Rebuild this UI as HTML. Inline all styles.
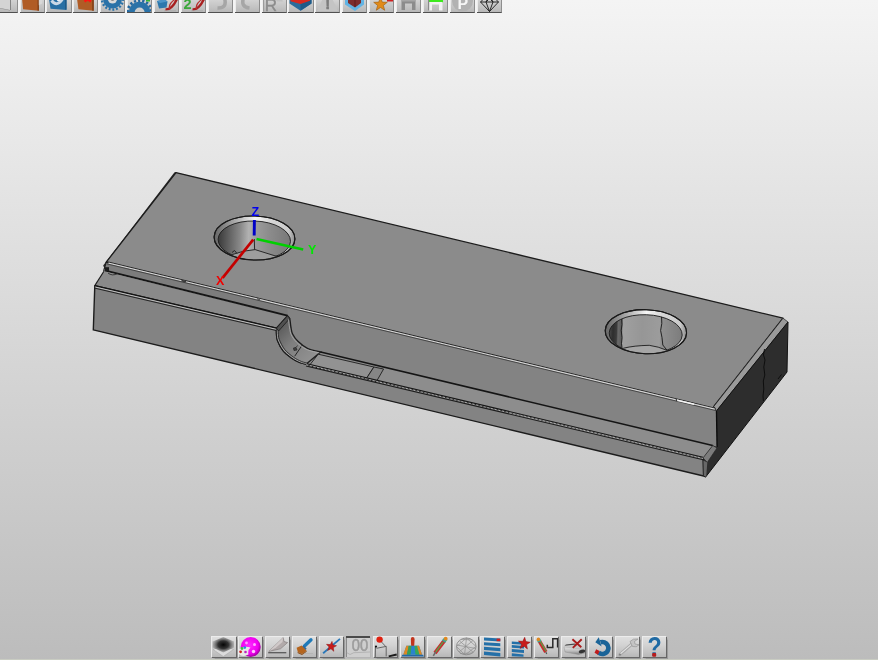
<!DOCTYPE html>
<html lang="en">
<head>
<meta charset="utf-8">
<title>CAD viewport</title>
<style>
html,body{margin:0;padding:0;}
body{width:878px;height:660px;overflow:hidden;position:relative;
  font-family:"Liberation Sans",sans-serif;
  background:linear-gradient(to bottom,#f4f4f4 0px,#bcbcbc 660px);}
#scene{position:absolute;left:0;top:0;width:878px;height:660px;filter:blur(0.45px);}
.tb{position:absolute;height:24px;filter:blur(0.4px);}
.btn{position:absolute;top:0;width:24.200px;height:21px;
  background:linear-gradient(to bottom,#e0e0e0 0%,#d4d4d4 40%,#c4c4c4 75%,#b8b8b8 100%);
  box-shadow:inset 1px 1px 0 #ececec, 1px 1px 0 #666, 1.500px 1.500px 1px #9a9a9a;
  overflow:hidden;}
.btn svg{position:absolute;left:0;top:0px;width:25px;height:23px;}
.btn.flat{background:#cecece;box-shadow:inset 0 2px 0 #4a4a4a, inset 1px 0 0 #8a8a8a, 1px 1px 0 #b4b4b4;}
#top{left:0;top:-8.700px;}
#top .btn svg{top:-1px;}
#top .btn{box-shadow:inset 1px 1px 0 #ececec, 0 1px 0 #505050, 1px 0 0 #8e8e8e, 1px 1px 0 #707070;}
#bot{left:211px;top:636.400px;}
#strip{position:absolute;left:0;top:659px;width:878px;height:1px;background:#c9ccc2;}
</style>
</head>
<body>
<svg id="scene" viewBox="0 0 878 660" width="878" height="660">
<defs>
<linearGradient id="gTop" x1="0" y1="0" x2="1" y2="0"><stop offset="0" stop-color="#8b8b8b"/><stop offset="1" stop-color="#8a8a8a"/></linearGradient>
<linearGradient id="gWallL" x1="0" y1="0" x2="1" y2="0">
 <stop offset="0" stop-color="#3a3a3a"/><stop offset="0.1" stop-color="#545454"/><stop offset="0.3" stop-color="#888888"/><stop offset="0.42" stop-color="#b2b2b2"/><stop offset="0.52" stop-color="#9c9c9c"/><stop offset="0.7" stop-color="#8c8c8c"/><stop offset="1" stop-color="#787878"/></linearGradient>
<linearGradient id="gWallR" x1="0" y1="0" x2="1" y2="0">
 <stop offset="0" stop-color="#4a4a4a"/><stop offset="0.05" stop-color="#2e2e2e"/><stop offset="0.1" stop-color="#3c3c3c"/><stop offset="0.12" stop-color="#6a6a6a"/><stop offset="0.17" stop-color="#5c5c5c"/><stop offset="0.185" stop-color="#a0a0a0"/><stop offset="0.45" stop-color="#969696"/><stop offset="0.69" stop-color="#9c9c9c"/><stop offset="0.71" stop-color="#909090"/><stop offset="1" stop-color="#7c7c7c"/></linearGradient>
<linearGradient id="gRing" x1="0" y1="0" x2="1" y2="0">
 <stop offset="0" stop-color="#666"/><stop offset="0.15" stop-color="#8e8e8e"/><stop offset="0.33" stop-color="#c0c0c0"/><stop offset="0.5" stop-color="#f6f6f6"/><stop offset="0.68" stop-color="#d8d8d8"/><stop offset="0.92" stop-color="#cacaca"/><stop offset="1" stop-color="#8a8a8a"/></linearGradient>
<linearGradient id="gFillet" x1="0" y1="0" x2="1" y2="1">
 <stop offset="0" stop-color="#4a4a4a"/><stop offset="0.45" stop-color="#7e7e7e"/><stop offset="1" stop-color="#999"/></linearGradient>
</defs>
<line x1="175.4" y1="173.4" x2="104.6" y2="265.8" stroke="#2c2c2c" stroke-width="2.7" stroke-linecap="round"/>
<polygon points="176.0,172.6 783.0,318.2 713.8,406.4 715.5,409.3 106.0,262.4" fill="#8b8b8b" stroke="#1c1c1c" stroke-width="1.3" stroke-linejoin="round"/>
<polygon points="783.0,318.2 788.0,322.0 716.6,410.8 713.8,406.4" fill="#9a9a9a" stroke="#1c1c1c" stroke-width="0.7"/>
<polygon points="716.6,410.8 788.0,322.0 787.0,372.0 705.5,477.2 703.6,476.0 703.0,457.9 712.7,445.5 717.0,446.9" fill="#2d2d2d" stroke="#111" stroke-width="1" stroke-linejoin="round"/>
<path d="M764.500,349 l-1,6 l1.500,5 l-1.200,7 l1,8 l-1.500,6 l0.500,8 l-0.800,7 l0.400,5 M781.500,374.500 l-3.500,4.500" fill="none" stroke="#0a0a0a" stroke-width="0.9"/>
<path d="M106,262.9 L716.2,410.0 L717,446.9 L712.7,445.5 L320.6,352.0  C318.4,351.4 311.2,350.1 307.4,348.3 C303.6,346.5 300.4,343.7 297.9,341.3 C295.4,338.9 293.8,336.4 292.6,334.0 C291.4,331.6 291.4,329.5 290.9,327.0 C290.4,324.5 290.4,320.9 289.8,319.0 C289.2,317.1 287.9,316.3 287.5,315.8 L107.7,271.5 L104.5,268.500 Z" fill="#838383"/>
<polygon points="106.0,262.9 287.5,306.7 287.5,315.8 107.7,271.5 104.5,268.5" fill="#7c7c7c"/>
<polygon points="103.9,271.2 287.5,315.8 276.5,328.1 94.8,285.6" fill="#8a8a8a"/>
<path d="M94.8,285.6 L276.500,328.100  C276.5,329.1 276.3,331.9 276.5,334.0 C276.7,336.1 276.4,337.7 277.5,340.5 C278.6,343.3 280.7,347.7 283.0,350.6 C285.3,353.5 288.8,356.0 291.5,358.0 C294.2,360.0 297.1,361.4 299.5,362.4 C301.9,363.4 304.9,363.9 306.0,364.2 L703,457.9 L703.6,476.0 L93.3,329.9 Z" fill="#838383" stroke="#1c1c1c" stroke-width="1.4" stroke-linejoin="round"/>
<polygon points="320.6,352.0 712.7,445.5 703.0,457.9 306.0,364.2" fill="#8d8d8d"/>
<path d="M287.500,315.800  C287.9,316.3 289.2,317.1 289.8,319.0 C290.4,320.9 290.4,324.5 290.9,327.0 C291.4,329.5 291.4,331.6 292.6,334.0 C293.8,336.4 295.4,338.9 297.9,341.3 C300.4,343.7 303.6,346.5 307.4,348.3 C311.2,350.1 318.4,351.4 320.6,352.0 L306,364.2  C304.9,363.9 301.9,363.4 299.5,362.4 C297.1,361.4 294.2,360.0 291.5,358.0 C288.8,356.0 285.3,353.5 283.0,350.6 C280.7,347.7 278.6,343.3 277.5,340.5 C276.4,337.7 276.7,336.1 276.5,334.0 C276.3,331.9 276.5,329.1 276.5,328.1 Z" fill="url(#gFillet)" stroke="#1c1c1c" stroke-width="1.3"/>
<polygon points="712.7,445.5 717.0,447.9 707.3,462.4 703.0,457.9" fill="#7c7c7c" stroke="#1c1c1c" stroke-width="0.6"/>
<polygon points="703.4,460.5 707.3,462.4 706.2,476.8 703.8,475.8" fill="#686868"/>
<line x1="107.0" y1="261.7" x2="715.5" y2="408.3" stroke="#222" stroke-width="1.00" />
<line x1="108.5" y1="263.1" x2="714.8" y2="409.3" stroke="#d4d4d4" stroke-width="1.40" />
<line x1="107.0" y1="263.9" x2="716.0" y2="410.6" stroke="#3c3c3c" stroke-width="0.90" />
<line x1="104.5" y1="270.4" x2="287.5" y2="315.6" stroke="#151515" stroke-width="1.90" />
<line x1="103.9" y1="271.2" x2="94.8" y2="285.6" stroke="#1c1c1c" stroke-width="1.10" />
<line x1="106.0" y1="263.0" x2="103.6" y2="271.0" stroke="#1c1c1c" stroke-width="1.10" />
<line x1="94.8" y1="285.6" x2="276.5" y2="328.1" stroke="#151515" stroke-width="1.20" />
<line x1="95.2" y1="287.0" x2="276.2" y2="329.3" stroke="#c4c4c4" stroke-width="0.90" />
<line x1="94.6" y1="288.1" x2="276.6" y2="330.6" stroke="#222" stroke-width="1.00" />
<line x1="320.6" y1="352.0" x2="712.7" y2="445.5" stroke="#141414" stroke-width="1.50" />
<polygon points="318.2,354.2 373.9,367.0 366.0,379.1 309.1,365.8" fill="#929292" stroke="#1c1c1c" stroke-width="0.9"/>
<polygon points="373.9,367.0 383.6,369.0 376.4,381.6 366.0,379.1" fill="#868686" stroke="#1c1c1c" stroke-width="0.9"/>
<line x1="306.0" y1="363.5" x2="703.0" y2="457.2" stroke="#151515" stroke-width="1.10" />
<line x1="306.0" y1="364.8" x2="703.0" y2="458.5" stroke="#b8b8b8" stroke-width="0.90" stroke-dasharray="2.2 1.6"/>
<line x1="306.0" y1="366.0" x2="703.2" y2="459.8" stroke="#1c1c1c" stroke-width="1.10" />
<line x1="716.4" y1="410.8" x2="717.0" y2="446.9" stroke="#0c0c0c" stroke-width="1.20" />
<path d="M276.500,328.100  C276.5,329.1 276.3,331.9 276.5,334.0 C276.7,336.1 276.4,337.7 277.5,340.5 C278.6,343.3 280.7,347.7 283.0,350.6 C285.3,353.5 288.8,356.0 291.5,358.0 C294.2,360.0 297.1,361.4 299.5,362.4 C301.9,363.4 304.9,363.9 306.0,364.2" fill="none" stroke="#b4b4b4" stroke-width="0.8" transform="translate(0.900,-0.500)"/>
<path d="M276.500,328.100  C276.5,329.1 276.3,331.9 276.5,334.0 C276.7,336.1 276.4,337.7 277.5,340.5 C278.6,343.3 280.7,347.7 283.0,350.6 C285.3,353.5 288.8,356.0 291.5,358.0 C294.2,360.0 297.1,361.4 299.5,362.4 C301.9,363.4 304.9,363.9 306.0,364.2" fill="none" stroke="#222" stroke-width="0.8" transform="translate(1.800,-1.000)"/>
<path d="M302.300,345 L294.700,356.200" fill="none" stroke="#1a1a1a" stroke-width="0.9"/>
<path d="M293.500,348 l2.500,-0.500 l1,2.500 l-3,0.500 z M296,347.500 l1.500,-2" fill="#444" stroke="#222" stroke-width="0.7"/>
<polygon points="276.5,328.1 287.5,315.8 289.8,318.4 278.6,331" fill="#505050" stroke="#1a1a1a" stroke-width="0.8"/>
<path d="M289.8,318.4  C290.0,320.3 290.4,324.5 290.9,327.0 C291.4,329.5 291.4,331.6 292.6,334.0 C293.8,336.4 295.4,338.9 297.9,341.3 C300.4,343.7 303.6,346.5 307.4,348.3 C311.2,350.1 318.4,351.4 320.6,352.0" fill="none" stroke="#b0b0b0" stroke-width="0.8" transform="translate(-1.300,0.900)"/>
<line x1="677.0" y1="400.2" x2="694.0" y2="404.3" stroke="#f4f4f4" stroke-width="1.60" />
<line x1="676.2" y1="399.0" x2="676.8" y2="401.2" stroke="#222" stroke-width="0.90" />
<line x1="181.5" y1="280.6" x2="186.0" y2="281.7" stroke="#3a3a3a" stroke-width="1.80" />
<line x1="257.0" y1="298.8" x2="260.0" y2="299.5" stroke="#5a5a5a" stroke-width="1.60" />
<path d="M108,273 q4,3.500 10,0.500" fill="none" stroke="#222" stroke-width="0.8"/>
<rect x="105" y="267.2" width="4" height="4" fill="#1c1c1c"/>
<clipPath id="c254"><ellipse cx="254.3" cy="240.3" rx="36.2" ry="19.3" transform="rotate(1.8 254.5 240.3)"/></clipPath>
<ellipse cx="254.5" cy="238.0" rx="40.4" ry="22.0" transform="rotate(1.8 254.5 238.0)" fill="url(#gRing)" stroke="#1a1a1a" stroke-width="1.1"/>
<ellipse cx="254.3" cy="240.3" rx="36.2" ry="19.3" transform="rotate(1.8 254.5 240.3)" fill="url(#gWallL)" stroke="#1c1c1c" stroke-width="0.9"/>
<g clip-path="url(#c254)">
<path d="M226,262 L232.500,254.500 Q243,250.400 255.100,249.600 L276.500,256.300 L290,262 L260,270 Z" fill="#9e9e9e" stroke="#1c1c1c" stroke-width="0.9"/>
<path d="M254.300,239 L254.600,249.500 M232,252.500 l2.500,-2 l2.500,3" fill="none" stroke="#1c1c1c" stroke-width="0.9"/>
</g>
<ellipse cx="254.5" cy="238.0" rx="40.4" ry="22.0" transform="rotate(1.8 254.5 238.0)" fill="none" stroke="#1a1a1a" stroke-width="1.1"/>
<clipPath id="c645"><ellipse cx="645.7" cy="334.0" rx="36.5" ry="19.3" transform="rotate(1.8 645.9 334.0)"/></clipPath>
<ellipse cx="645.9" cy="331.7" rx="40.7" ry="22.0" transform="rotate(1.8 645.9 331.7)" fill="url(#gRing)" stroke="#1a1a1a" stroke-width="1.1"/>
<ellipse cx="645.7" cy="334.0" rx="36.5" ry="19.3" transform="rotate(1.8 645.9 334.0)" fill="url(#gWallR)" stroke="#1c1c1c" stroke-width="0.9"/>
<g clip-path="url(#c645)">
<path d="M615,356 L623.600,348.200 Q634,345.600 649.200,345.300 Q658,346.400 667.500,350.500 L680,356 L650,362 Z" fill="#a6a6a6" stroke="#1c1c1c" stroke-width="0.9"/>
<path d="M621.500,316.500 l0.500,8 l-0.800,6 l0.900,7 l-0.600,6 l0.500,4 M661.500,315.500 l0.300,8 l-1.200,7 l1.400,7 l0.800,7.500 l4,5" fill="none" stroke="#161616" stroke-width="0.9"/>
</g>
<ellipse cx="645.9" cy="331.7" rx="40.7" ry="22.0" transform="rotate(1.8 645.9 331.7)" fill="none" stroke="#1a1a1a" stroke-width="1.1"/>
<line x1="253.2" y1="239.6" x2="222.6" y2="277.8" stroke="#c40000" stroke-width="2.7"/>
<line x1="256.5" y1="239" x2="303.2" y2="249.4" stroke="#00d000" stroke-width="2.6"/>
<line x1="254.4" y1="220" x2="254.2" y2="235.5" stroke="#0000c8" stroke-width="2.9"/>
<g font-family="Liberation Sans, sans-serif" font-weight="bold" font-size="12.5px" text-anchor="middle"><text x="255.3" y="215.6" fill="#0000ee">Z</text><text x="312.1" y="254.3" fill="#00e800">Y</text><text x="220.2" y="285.1" fill="#f00000">X</text></g>
</svg>
<div class="tb" id="top">
<div class="btn " style="left:-7.4px"><svg viewBox="0 0 25 23"><polygon points="0,0 17,0 17,19.900 7,17.900 0,17" fill="#d4d4d4"/><polygon points="17,0 18,0 18,20.100 17,19.900" fill="#858585"/><polygon points="7,17.900 17,19.900 17,20.500 7,18.500" fill="#909090"/></svg></div>
<div class="btn " style="left:19.5px"><svg viewBox="0 0 25 23"><polygon points="1.700,6 18.800,6 18.800,20.800 3.100,19.300" fill="#b05c26"/><polygon points="17.600,6 18.800,6 18.800,20.800 17.600,20.700" fill="#7c3c14"/><polygon points="18.800,6 22.200,6 22.200,13.500 18.800,15.200" fill="#d8d8d8"/></svg></div>
<div class="btn " style="left:46.4px"><svg viewBox="0 0 25 23"><polygon points="2.500,6 20.500,6 20.500,19.900 4.500,18.800" fill="#276fa4"/><polygon points="19,6 20.500,6 20.500,19.600 19,19.400" fill="#1d5a88"/><path d="M5.500,10.500 q5.500,7 11,-1.500" fill="none" stroke="#c9d8e6" stroke-width="3"/><circle cx="12.500" cy="9.300" r="1.900" fill="#eef2f6"/></svg></div>
<div class="btn " style="left:73.3px"><svg viewBox="0 0 25 23"><polygon points="3.700,6 20.700,6 20.700,20.800 5.400,19.300" fill="#b05c26"/><polygon points="19.300,6 20.700,6 20.700,20.800 19.300,20.700" fill="#7c3c14"/><path d="M10,6 l8,5.500 M18.500,6.500 l-7,5" stroke="#ff1414" stroke-width="2.400"/></svg></div>
<div class="btn " style="left:100.2px"><svg viewBox="0 0 25 23"><circle cx="12.500" cy="9" r="9.500" fill="#2a72a8"/><circle cx="12.500" cy="9" r="10.600" fill="none" stroke="#2a72a8" stroke-width="2.400" stroke-dasharray="1.900 1.800"/><circle cx="12.500" cy="9" r="4.600" fill="#dadada"/><circle cx="12.500" cy="9" r="2" fill="#8a8a8a"/></svg></div>
<div class="btn " style="left:127.0px"><svg viewBox="0 0 25 23"><circle cx="12.600" cy="22.500" r="10.800" fill="#2a72a8"/><circle cx="12.600" cy="22.500" r="12" fill="none" stroke="#2468a0" stroke-width="2.800" stroke-dasharray="2.200 2"/><circle cx="12.600" cy="22.500" r="5" fill="#cfcfcf"/><rect x="19" y="8" width="4" height="3.500" fill="#35b335"/></svg></div>
<div class="btn " style="left:153.9px"><svg viewBox="0 0 25 23"><polygon points="3,11 10.500,9.500 13.500,11.500 12.500,17.500 5,18.500" fill="#2d78ad"/><polygon points="3,11 10.500,9.500 13.500,11.500 6,13" fill="#4c95c8"/><path d="M11.500,19.500 q6.500,0.500 12,-11.500" fill="none" stroke="#a82020" stroke-width="2.400"/><path d="M15.800,19.800 q-2.500,-6 7.500,-12" fill="none" stroke="#b83030" stroke-width="1.300"/><path d="M10,20.800 h12" stroke="#a8a8a8" stroke-width="0.800"/></svg></div>
<div class="btn " style="left:180.8px"><svg viewBox="0 0 25 23"><text x="2.500" y="19" font-family="Liberation Sans, sans-serif" font-weight="bold" font-size="14.500" fill="#3ba83b">2</text><path d="M11.500,19.500 q6.500,0.500 12,-11.500" fill="none" stroke="#a82020" stroke-width="2.400"/><path d="M15.800,19.800 q-2.500,-6 7.500,-12" fill="none" stroke="#b83030" stroke-width="1.300"/><path d="M10,20.800 h12" stroke="#a8a8a8" stroke-width="0.800"/></svg></div>
<div class="btn " style="left:207.7px"><svg viewBox="0 0 25 23"><path d="M9.500,18 q10,0.500 7,-10" fill="none" stroke="#a6a6a6" stroke-width="3.600"/></svg></div>
<div class="btn " style="left:234.6px"><svg viewBox="0 0 25 23"><path d="M14.500,18 q-9,-1 -6,-10" fill="none" stroke="#a6a6a6" stroke-width="3.600"/></svg></div>
<div class="btn " style="left:261.5px"><svg viewBox="0 0 25 23"><text x="2.800" y="21.300" font-family="Liberation Sans, sans-serif" font-size="17" fill="#8c8c8c" stroke="#8c8c8c" stroke-width="0.400">R</text><polygon points="13,9 19,9 21.500,11.500 15,11.500" fill="#c2c2c2"/><rect x="1" y="9" width="1.200" height="12.500" fill="#9a9a9a"/></svg></div>
<div class="btn " style="left:288.4px"><svg viewBox="0 0 25 23"><polygon points="1.500,9 23.500,9 23.500,13.500 12.500,20.800 1.500,13.500" fill="#2a6c9c"/><polygon points="12.500,20.800 23.500,13.500 23.500,9 12.500,14" fill="#1f5a88"/><polygon points="2.500,9 22,9 22,10.800 12.500,14 2.500,11.300" fill="#d62a20"/></svg></div>
<div class="btn " style="left:315.3px"><svg viewBox="0 0 25 23"><polygon points="2,21 12.500,-1 23,21" fill="#c4c4c4"/><text x="10.200" y="18.800" font-family="Liberation Sans, sans-serif" font-weight="bold" font-size="15" fill="#7c7c7c" stroke="#7c7c7c" stroke-width="0.500">!</text></svg></div>
<div class="btn " style="left:342.2px"><svg viewBox="0 0 25 23"><polygon points="3,9 22,9 22,14.500 13,21 3,14.500" fill="#62b4e4"/><polygon points="6,9 19,9 19,13 13,17.500 6,13" fill="#7c2c2c"/><polygon points="12.500,9 13.500,9 13.500,17 12.500,17" fill="#5a1c1c"/></svg></div>
<div class="btn " style="left:369.1px"><svg viewBox="0 0 25 23"><polygon points="11.5,7.3 13.3,12.1 18.3,12.3 14.4,15.4 15.7,20.3 11.5,17.5 7.3,20.3 8.6,15.4 4.7,12.3 9.7,12.1" fill="#e08a1a" stroke="#9a5a10" stroke-width="0.600"/><rect x="18" y="8" width="6.500" height="3.500" fill="#d02020"/><rect x="18" y="8" width="6.500" height="1.400" fill="#3a6ac8"/></svg></div>
<div class="btn " style="left:396.0px"><svg viewBox="0 0 25 23"><path d="M5.500,9 h14 v11 h-3.500 v-6.500 h-7 v6.500 h-3.500 z" fill="#8c8c8c"/><rect x="5.500" y="9" width="14" height="2.500" fill="#a6a6a6"/></svg></div>
<div class="btn " style="left:422.8px"><svg viewBox="0 0 25 23"><rect x="5" y="8" width="15" height="4.500" fill="#3eea1e"/><path d="M5.500,12 h14 v8.500 h-3.500 v-6 h-7 v6 h-3.500 z" fill="#f2f2f2"/><rect x="5" y="8" width="1.200" height="12.500" fill="#8a8a8a"/></svg></div>
<div class="btn " style="left:449.7px"><svg viewBox="0 0 25 23"><circle cx="12.500" cy="11" r="10.500" fill="#b2b2b2"/><text x="7.500" y="18.500" font-family="Liberation Sans, sans-serif" font-weight="bold" font-size="16" fill="#f6f6f6">P</text></svg></div>
<div class="btn " style="left:476.6px"><svg viewBox="0 0 25 23"><path d="M3.500,12 h18 l-9,9.500 z M3.500,12 l3.500,-3.500 h11 l3.500,3.500 M9,12 l3.500,9.500 l3.500,-9.500 M9,12 l1.800,-3.500 M16,12 l-1.800,-3.500 M9,12 l3.500,-3.500 l3.500,3.500" fill="none" stroke="#1a1a1a" stroke-width="0.9"/></svg></div>

</div>
<div class="tb" id="bot">
<div class="btn " style="left:0.4px"><svg viewBox="0 0 25 23"><defs><radialGradient id="ly" cx="0.5" cy="0.5" r="0.5"><stop offset="0" stop-color="#050505"/><stop offset="0.5" stop-color="#2a2a2a" stop-opacity="0.95"/><stop offset="1" stop-color="#666" stop-opacity="0.35"/></radialGradient></defs><polygon points="12.300,20.500 22.500,13.500 12.300,9 2,13.500" fill="#dcdcdc" stroke="#aaa" stroke-width="0.600"/><polygon points="12.300,1 23,5.500 23,11.500 12.300,16.500 1.600,11.500 1.600,5.500" fill="url(#ly)"/></svg></div>
<div class="btn " style="left:27.3px"><svg viewBox="0 0 25 23"><defs><radialGradient id="mg" cx="0.45" cy="0.42" r="0.56"><stop offset="0" stop-color="#ff28ff"/><stop offset="0.75" stop-color="#f000f0"/><stop offset="1" stop-color="#a800a8"/></radialGradient></defs><circle cx="12.700" cy="11" r="10" fill="url(#mg)"/><circle cx="8.500" cy="7" r="1.400" fill="#ff9cff"/><circle cx="16.500" cy="8.500" r="1.500" fill="#ffa8ff"/><circle cx="15.500" cy="15.500" r="1.700" fill="#ffc4ff"/><path d="M1,13 q5.500,-3.500 11.500,-1.500 q-3,2.500 -2,7 q-6,3 -9.500,-0.500 z" fill="#e8e8e8"/><circle cx="4" cy="12.500" r="1.400" fill="#40c040"/><circle cx="6.800" cy="11.600" r="1.300" fill="#2090e0"/><circle cx="2.600" cy="15.800" r="1.400" fill="#d02020"/><circle cx="7.500" cy="16" r="1.300" fill="#c020c0"/></svg></div>
<div class="btn " style="left:54.2px"><svg viewBox="0 0 25 23"><polygon points="3.800,15.400 18.200,1.600 19,5.500 22.600,6.600 15.500,12.800" fill="#b2aaaa" stroke="#7c7676" stroke-width="0.600"/><polygon points="3.800,15.400 18.200,1.600 17.500,6 11,11.500" fill="#d0c9c9"/><line x1="3.200" y1="16.700" x2="21.300" y2="16.700" stroke="#5a5a5a" stroke-width="1.300"/></svg></div>
<div class="btn " style="left:81.1px"><svg viewBox="0 0 25 23"><path d="M19,3.800 L12.500,10" stroke="#1f7ab8" stroke-width="3.400" stroke-linecap="round"/><path d="M11.500,9.300 l3.200,3.400 l-2,2 l-3.200,-3.400 z" fill="#2a68a0"/><polygon points="4.600,11.700 9.600,9.500 14.600,14.800 10.200,17.900 5.800,16" fill="#b5651d"/><polygon points="5.800,16 10.200,17.900 14.600,14.800 14.600,15.800 10,19 5.500,17" fill="#8a4a12"/><line x1="13" y1="17.500" x2="21" y2="17.500" stroke="#b0b0b0" stroke-width="0.7"/></svg></div>
<div class="btn " style="left:108.0px"><svg viewBox="0 0 25 23"><line x1="4.100" y1="17.300" x2="21" y2="2.900" stroke="#2a78b8" stroke-width="1.800"/><polygon points="13.0,5.4 13.8,9.0 17.5,9.7 14.3,11.6 14.8,15.3 12.0,12.8 8.6,14.4 10.1,11.0 7.5,8.3 11.3,8.6" fill="#c81c1c" stroke="#8a1010" stroke-width="0.500"/></svg></div>
<div class="btn flat" style="left:134.8px"><svg viewBox="0 0 25 23"><text x="5.800" y="14.800" font-family="Liberation Sans, sans-serif" font-size="16.600" fill="#9c9c9c" stroke="#9c9c9c" stroke-width="0.550" textLength="16.400" lengthAdjust="spacingAndGlyphs">00</text><path d="M0.900,16.700 l3.100,1.800 l3.800,-1.800 l16.200,-0.700" fill="none" stroke="#b0b0b0" stroke-width="0.9"/></svg></div>
<div class="btn " style="left:161.7px"><svg viewBox="0 0 25 23"><circle cx="6.600" cy="3.600" r="3.200" fill="#e02010"/><path d="M8.500,6 L12.800,10.600 M3.500,12.300 L13.200,10.400 L13.200,20.400 M2.500,10.400 L2.300,21.700" fill="none" stroke="#5a5a5a" stroke-width="0.9"/><circle cx="3" cy="10.600" r="1.100" fill="#111"/><path d="M15.700,20.400 l8,-1.900" stroke="#1a1a1a" stroke-width="1.800"/></svg></div>
<div class="btn " style="left:188.6px"><svg viewBox="0 0 25 23"><path d="M10.800,3 q0,-2 1.900,-2 q1.900,0 1.900,2 l-0.400,7 h-3 z" fill="#c2341c"/><path d="M6.400,9.800 h12.600 l3.100,9 h-18.800 z" fill="#2a84cc"/><path d="M6.400,9.800 h2.400 l-2,9 h-3.500 z" fill="#e08820"/><path d="M8.800,9.800 h2.700 l-1,9 h-3.700 z" fill="#3aa050"/><path d="M14.500,9.800 h2.500 l2.500,9 h-4 z" fill="#38a858"/><path d="M17,9.800 h2 l3.100,9 h-2.600 z" fill="#e08820"/><path d="M2.300,18.800 h20.700 l1,1.700 h-22.500 z" fill="#2268a8"/></svg></div>
<div class="btn " style="left:215.5px"><svg viewBox="0 0 25 23"><path d="M17.500,4.500 L8,17" stroke="#c43030" stroke-width="3.800"/><path d="M16,6 L8.800,15.800" stroke="#48b048" stroke-width="1.200"/><path d="M18.800,2.600 L16.600,5.600" stroke="#38a898" stroke-width="4"/><circle cx="18.700" cy="2.700" r="1.900" fill="#e08820"/><path d="M8.600,16 L6.300,19.800" stroke="#6a6a6a" stroke-width="1.600"/></svg></div>
<div class="btn " style="left:242.4px"><svg viewBox="0 0 25 23"><ellipse cx="13.300" cy="10.400" rx="9.800" ry="8.400" fill="none" stroke="#8a8a8a" stroke-width="0.9"/><path d="M3.800,9 L23,12.500 M13.500,2 L11.500,19 M6,16 L20,4.500 M6.500,5 L20.500,16.500 M3.500,10.500 L13.500,2 L23,10.400 L12,19 Z M8,3.500 L19,3.800 M7,17.500 L19.500,17" fill="none" stroke="#8e8e8e" stroke-width="0.7"/></svg></div>
<div class="btn " style="left:269.3px"><svg viewBox="0 0 25 23"><g fill="#2470a8"><polygon points="4,1.600 20.300,2.600 20.300,5.600 4,4.600"/><polygon points="4,6.200 20.300,7.300 20.300,10.300 4,9.200"/><polygon points="4,10.800 20.300,12 20.300,15.200 4,14"/><polygon points="4,15.600 20.300,17 20.300,20.400 4,19"/></g><rect x="16.600" y="2.600" width="3.700" height="2.600" fill="#cc2020"/></svg></div>
<div class="btn " style="left:296.2px"><svg viewBox="0 0 25 23"><g fill="#2470a8"><polygon points="4.800,5.400 16,6.200 16,8.700 4.800,7.900"/><polygon points="4.800,9.100 17,10 17,12.600 4.800,11.700"/><polygon points="4.800,12.900 17,13.900 17,16.900 4.800,15.900"/><polygon points="4.800,17.300 16.500,18.400 16.500,20.800 4.800,20.200"/></g><polygon points="17.7,1.3 18.9,5.6 23.3,6.2 19.6,8.6 20.4,13.0 17.0,10.2 13.1,12.4 14.6,8.2 11.4,5.1 15.8,5.3" fill="#c81c1c" stroke="#8a1010" stroke-width="0.500"/></svg></div>
<div class="btn " style="left:323.1px"><svg viewBox="0 0 25 23"><path d="M5.300,5 L11.800,16" stroke="#c43030" stroke-width="3.600"/><path d="M6.200,5.200 L12,15" stroke="#48b048" stroke-width="1.100"/><path d="M4.300,3.300 L5.800,5.900" stroke="#38a898" stroke-width="3.800"/><circle cx="4.400" cy="3.400" r="1.800" fill="#e08820"/><path d="M11.800,16 L12.800,18" stroke="#555" stroke-width="1.200"/><path d="M13.300,8.800 v2.700 h5.500 v-8.700 h4.800 v7.900 h1.400" fill="none" stroke="#2a2a2a" stroke-width="1.500"/></svg></div>
<div class="btn " style="left:350.0px"><svg viewBox="0 0 25 23"><defs><linearGradient id="mt" x1="0" y1="0" x2="0" y2="1"><stop offset="0" stop-color="#e2e2e2"/><stop offset="0.55" stop-color="#bdbdbd"/><stop offset="1" stop-color="#7c7c7c"/></linearGradient></defs><path d="M3,10.800 L20,12.800 L24.300,14.500 L24.300,16.800 L17.500,18.600 L4,16 Z" fill="url(#mt)" stroke="#8a8a8a" stroke-width="0.400"/><path d="M3,10.800 L5,8.600 L14,7.800 L22,11.500 L24.300,14.500 L20,12.800 Z" fill="#c9c9c9"/><path d="M3.500,9.800 L5,8.400 L13.500,7.600 L15.500,8.600 Z" fill="#484848"/><ellipse cx="21" cy="15.400" rx="3.300" ry="1.700" fill="#333" transform="rotate(-14 21 15.400)"/><path d="M11.400,3.300 L20.300,11.200 M20.700,3.300 L11.800,11.900" stroke="#a81c1c" stroke-width="1.900"/></svg></div>
<div class="btn " style="left:376.9px"><svg viewBox="0 0 25 23"><path d="M12.500,6.300 A6,6 0 1 1 10.500,16.600" fill="none" stroke="#1a6498" stroke-width="4.600"/><polygon points="7.300,6.200 10.800,1.200 13.600,10.400" fill="#1a6498"/><polygon points="8.200,13.300 11.600,15 9.900,18.700 6.500,16.700" fill="#c01c1c"/></svg></div>
<div class="btn " style="left:403.8px"><svg viewBox="0 0 25 23"><path d="M4.800,18.600 L17,8" stroke="#aaaaaa" stroke-width="3.200" stroke-linecap="round"/><path d="M5,18.200 L17,7.800" stroke="#e4e4e4" stroke-width="1.100" stroke-linecap="round"/><path d="M15,5.500 q3,-3.500 8,-2.500 l-3.500,2.500 l0.500,2.500 l4,0.800 q-2.500,3.200 -6.500,1.700 z" fill="#c4c4c4" stroke="#8e8e8e" stroke-width="0.600"/><circle cx="5" cy="18.500" r="0.900" fill="#777"/></svg></div>
<div class="btn " style="left:430.6px"><svg viewBox="0 0 25 23"><text x="12.600" y="20.400" text-anchor="middle" font-family="Liberation Sans, sans-serif" font-weight="bold" font-size="27.500" fill="#1f6aa4" textLength="14.200" lengthAdjust="spacingAndGlyphs">?</text><rect x="10.200" y="16.900" width="4" height="3.900" rx="1" fill="#b81c1c"/></svg></div>

</div>
<div id="strip"></div>
</body>
</html>
